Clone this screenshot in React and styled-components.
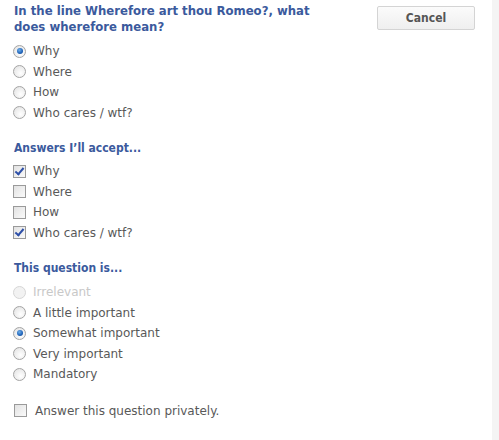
import styled, { createGlobalStyle } from "styled-components";

const GlobalStyle = createGlobalStyle`
  html, body {
    margin: 0;
    padding: 0;
    background: #ffffff;
  }
  body {
    font-family: "DejaVu Sans", Verdana, sans-serif;
  }
`;

const boldFont = `"DejaVu Sans Condensed", "DejaVu Sans", Verdana, sans-serif`;

const questionOptions = [
  { label: "Why", checked: true },
  { label: "Where" },
  { label: "How" },
  { label: "Who cares / wtf?" },
];

const acceptOptions = [
  { label: "Why", checked: true },
  { label: "Where" },
  { label: "How" },
  { label: "Who cares / wtf?", checked: true },
];

const importanceOptions = [
  { label: "Irrelevant", disabled: true },
  { label: "A little important" },
  { label: "Somewhat important", checked: true },
  { label: "Very important" },
  { label: "Mandatory" },
];

export default function App() {
  return (
    <Page>
      <GlobalStyle />
      <Form>
        <Header>
          <Question>
            In the line Wherefore art thou Romeo?, what does wherefore mean?
          </Question>
          <CancelButton>Cancel</CancelButton>
        </Header>

        <OptionList $top={6}>
          {questionOptions.map((o) => (
            <Option key={o.label}>
              <Radio $checked={o.checked} />
              <OptionLabel>{o.label}</OptionLabel>
            </Option>
          ))}
        </OptionList>

        <SectionTitle>Answers I’ll accept...</SectionTitle>
        <OptionList>
          {acceptOptions.map((o) => (
            <Option key={o.label}>
              <Checkbox $checked={o.checked} />
              <OptionLabel>{o.label}</OptionLabel>
            </Option>
          ))}
        </OptionList>

        <SectionTitle>This question is...</SectionTitle>
        <OptionList $top={6}>
          {importanceOptions.map((o) => (
            <Option key={o.label}>
              <Radio $checked={o.checked} $disabled={o.disabled} />
              <OptionLabel $disabled={o.disabled}>{o.label}</OptionLabel>
            </Option>
          ))}
        </OptionList>

        <PrivateRow>
          <Checkbox />
          <PrivateLabel>Answer this question privately.</PrivateLabel>
        </PrivateRow>
      </Form>
      <Scrollbar />
    </Page>
  );
}

const Page = styled.div`
  display: flex;
  width: 499px;
  height: 440px;
  overflow: hidden;
`;

const Form = styled.div`
  flex: 1;
  padding: 3px 0 0 13px;
`;

const Scrollbar = styled.div`
  width: 7px;
  background: #f4f4f4;
`;

const Header = styled.div`
  display: flex;
  align-items: flex-start;
  justify-content: space-between;
  padding-right: 17px;
`;

const Question = styled.h2`
  margin: 0;
  width: 330px;
  font-family: ${boldFont};
  font-size: 13px;
  line-height: 16px;
  font-weight: bold;
  color: #3b5a9d;
  padding-left: 1px;
`;

const CancelButton = styled.button`
  width: 98px;
  height: 24px;
  margin-top: 3px;
  border: 1px solid #d4d4d4;
  border-radius: 2px;
  background: linear-gradient(#fbfbfb, #efefef);
  font-family: ${boldFont};
  font-size: 12px;
  font-weight: bold;
  color: #555555;
  padding: 0;
`;

const OptionList = styled.div`
  display: flex;
  flex-direction: column;
  margin-top: ${(p) => (p.$top ?? 5)}px;
`;

const Option = styled.div`
  display: flex;
  align-items: center;
  height: 20.5px;
`;

const Radio = styled.span`
  width: 11px;
  height: 11px;
  border-radius: 50%;
  border: 1px solid ${(p) => (p.$disabled ? "#d6d6d6" : "#a4a4a4")};
  background: ${(p) =>
    p.$disabled
      ? "#f2f2f2"
      : "radial-gradient(circle at 60% 65%, #ffffff 0%, #e6e6e6 80%)"};
  position: relative;
  flex-shrink: 0;
  &::after {
    content: "";
    display: ${(p) => (p.$checked ? "block" : "none")};
    position: absolute;
    left: 2.5px;
    top: 2.5px;
    width: 6px;
    height: 6px;
    border-radius: 50%;
    background: radial-gradient(circle at 40% 35%, #6fb0ea 0%, #1f62b8 60%, #0b3f86 100%);
  }
`;

const Checkbox = styled.span`
  width: 11px;
  height: 11px;
  border: 1px solid #9a9a9a;
  background: linear-gradient(135deg, #e2e2e2, #fafafa);
  position: relative;
  flex-shrink: 0;
  &::after {
    content: "";
    display: ${(p) => (p.$checked ? "block" : "none")};
    position: absolute;
    left: 3px;
    top: 0px;
    width: 3px;
    height: 7px;
    border: solid #2d4fa8;
    border-width: 0 2px 2px 0;
    transform: rotate(40deg);
  }
`;

const OptionLabel = styled.span`
  margin-left: 7px;
  font-size: 12px;
  color: ${(p) => (p.$disabled ? "#c8c8c8" : "#595959")};
`;

const SectionTitle = styled.h3`
  margin: 17px 0 0 1px;
  font-family: ${boldFont};
  font-size: 12px;
  line-height: 16px;
  font-weight: bold;
  color: #3b5a9d;
`;

const PrivateRow = styled.div`
  display: flex;
  align-items: center;
  margin-top: 19px;
  padding-left: 1px;
`;

const PrivateLabel = styled.span`
  margin-left: 8px;
  font-size: 12px;
  color: #595959;
`;
